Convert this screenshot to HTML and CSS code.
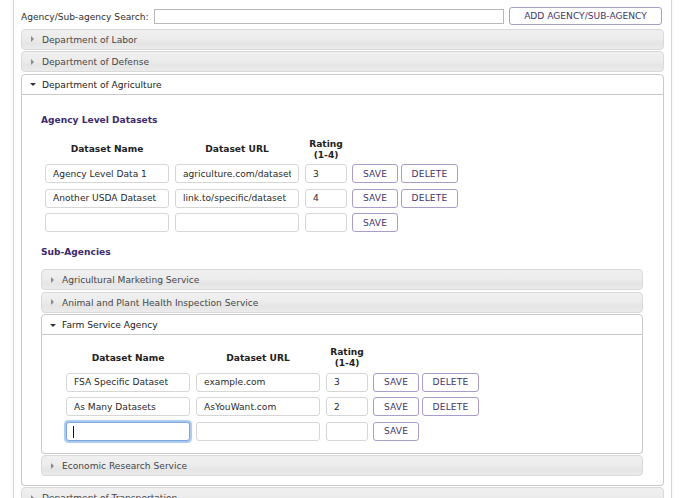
FILE: index.html
```html
<!DOCTYPE html>
<html>
<head>
<meta charset="utf-8">
<title>Agencies</title>
<link rel="stylesheet" href="styles.css">
</head>
<body>
<div class="page">
  <div class="search-row">
    <label class="search-label">Agency/Sub-agency Search:</label>
    <input class="search-input" type="text">
    <button class="btn btn-add">ADD AGENCY/SUB-AGENCY</button>
  </div>

  <div class="accordion">
    <div class="acc-header"><span class="tri tri-right"></span>Department of Labor</div>
    <div class="acc-header"><span class="tri tri-right"></span>Department of Defense</div>
    <div class="acc-header active"><span class="tri tri-down"></span>Department of Agriculture</div>
    <div class="acc-content outer">
      <h3 class="section-title first">Agency Level Datasets</h3>
      <div class="ds-grid">
        <div class="col-head">Dataset Name</div>
        <div class="col-head">Dataset URL</div>
        <div class="col-head">Rating<br>(1-4)</div>
        <div></div>

        <input class="field" type="text" value="Agency Level Data 1">
        <input class="field" type="text" value="agriculture.com/dataset">
        <input class="field" type="text" value="3">
        <div class="actions"><button class="btn btn-save">SAVE</button><button class="btn btn-del">DELETE</button></div>

        <input class="field" type="text" value="Another USDA Dataset">
        <input class="field" type="text" value="link.to/specific/dataset">
        <input class="field" type="text" value="4">
        <div class="actions"><button class="btn btn-save">SAVE</button><button class="btn btn-del">DELETE</button></div>

        <input class="field" type="text" value="">
        <input class="field" type="text" value="">
        <input class="field" type="text" value="">
        <div class="actions"><button class="btn btn-save">SAVE</button></div>
      </div>

      <h3 class="section-title second">Sub-Agencies</h3>

      <div class="accordion sub">
        <div class="acc-header"><span class="tri tri-right"></span>Agricultural Marketing Service</div>
        <div class="acc-header"><span class="tri tri-right"></span>Animal and Plant Health Inspection Service</div>
        <div class="acc-header active"><span class="tri tri-down"></span>Farm Service Agency</div>
        <div class="acc-content inner">
          <div class="ds-grid">
            <div class="col-head">Dataset Name</div>
            <div class="col-head">Dataset URL</div>
            <div class="col-head">Rating<br>(1-4)</div>
            <div></div>

            <input class="field" type="text" value="FSA Specific Dataset">
            <input class="field" type="text" value="example.com">
            <input class="field" type="text" value="3">
            <div class="actions"><button class="btn btn-save">SAVE</button><button class="btn btn-del">DELETE</button></div>

            <input class="field" type="text" value="As Many Datasets">
            <input class="field" type="text" value="AsYouWant.com">
            <input class="field" type="text" value="2">
            <div class="actions"><button class="btn btn-save">SAVE</button><button class="btn btn-del">DELETE</button></div>

            <span class="caret-wrap"><input class="field focused" type="text" value=""></span>
            <input class="field" type="text" value="">
            <input class="field" type="text" value="">
            <div class="actions"><button class="btn btn-save">SAVE</button></div>
          </div>
        </div>
        <div class="acc-header"><span class="tri tri-right"></span>Economic Research Service</div>
      </div>
    </div>
    <div class="acc-header"><span class="tri tri-right"></span>Department of Transportation</div>
  </div>
</div>
</body>
</html>
```

FILE: styles.css
```css
html, body {
  margin: 0;
  padding: 0;
  background: #ffffff;
  overflow: hidden;
}

body {
  font-family: "DejaVu Sans", Verdana, sans-serif;
  font-size: 9.1px;
  color: #333333;
}

.page {
  margin-left: 13px;
  width: 643px;
  padding: 7px 7px 0 7px;
  border-left: 1px solid #d6d6d6;
  border-right: 1px solid #d6d6d6;
  box-shadow: 0 0 3px rgba(0, 0, 0, 0.06);
  min-height: 520px;
}

.search-row {
  display: flex;
  align-items: center;
  height: 18px;
  margin-bottom: 3.5px;
}

.search-label {
  width: 129px;
  margin-right: 4px;
  padding-top: 1px;
  color: #2f2f2f;
  white-space: nowrap;
}

.search-input {
  box-sizing: border-box;
  width: 350px;
  height: 15px;
  margin: 1px 0 0 0;
  padding: 0 4px;
  border: 1px solid #b9b9b9;
  border-radius: 0;
  font: inherit;
  outline: none;
}

.btn {
  box-sizing: border-box;
  height: 19px;
  padding: 0;
  margin: 0;
  background: #ffffff;
  border: 1px solid #a99dcb;
  border-radius: 3px;
  font-family: "DejaVu Sans", Verdana, sans-serif;
  font-size: 9.1px;
  letter-spacing: 0.15px;
  color: #45386a;
  cursor: pointer;
}

.btn-add {
  width: 153px;
  height: 18px;
  margin-left: 5px;
  letter-spacing: 0;
}

/* Accordion */
.accordion {
  display: flex;
  flex-direction: column;
}

.acc-header {
  box-sizing: border-box;
  height: 21px;
  margin-top: 1.5px;
  display: flex;
  align-items: center;
  padding-left: 20px;
  padding-top: 1px;
  position: relative;
  border: 1px solid #d9d9d9;
  border-radius: 4px;
  background: linear-gradient(#f0f0f0 0%, #ececec 45%, #e5e5e5 70%, #ebebeb 100%);
  color: #474747;
  white-space: nowrap;
}

.accordion > .acc-header:first-child {
  margin-top: 0;
}

.acc-header.active {
  background: #ffffff;
  border-color: #c9c9c9;
  border-radius: 4px 4px 0 0;
  color: #222222;
}

.tri {
  position: absolute;
  left: 9px;
  top: 50%;
  width: 0;
  height: 0;
}

.tri-right {
  margin-top: -3px;
  border-top: 3px solid transparent;
  border-bottom: 3px solid transparent;
  border-left: 3px solid #8a8a8a;
}

.tri-down {
  margin-top: -1px;
  left: 8px;
  border-left: 3px solid transparent;
  border-right: 3px solid transparent;
  border-top: 3px solid #333333;
}

.acc-content {
  box-sizing: border-box;
  border: 1px solid #c9c9c9;
  border-top: 0;
  border-radius: 0 0 4px 4px;
  background: #ffffff;
}

.acc-content.outer {
  padding: 12px 20px 8.5px 19px;
}

.acc-content.inner {
  padding: 10px 20px 12px 20px;
}

.section-title {
  margin: 0;
  font-size: 9.1px;
  line-height: 12px;
  font-weight: bold;
  color: #3c2b6e;
}

.section-title.first {
  margin: 7px 0 11px 0;
}

.section-title.second {
  margin: 14px 0 11px 0;
}

/* Dataset grid */
.ds-grid {
  display: grid;
  grid-template-columns: 124px 124px 42px auto;
  column-gap: 6px;
  row-gap: 5.5px;
  padding-left: 4px;
  align-items: center;
}

.col-head {
  text-align: center;
  font-weight: bold;
  color: #222222;
  line-height: 11px;
  padding-top: 2px;
  margin-bottom: -2px;
}

.field {
  box-sizing: border-box;
  width: 100%;
  height: 19px;
  margin: 0;
  padding: 0 7px;
  border: 1px solid #d6d6d6;
  border-radius: 3px;
  font-family: "DejaVu Sans", Verdana, sans-serif;
  font-size: 9.1px;
  color: #2a2a2a;
  background: #ffffff;
  outline: none;
}

.field.focused {
  border-color: #7ea8dc;
  box-shadow: 0 0 1px 1.5px #a9c9ee;
}

.caret-wrap {
  position: relative;
  display: block;
}

.caret-wrap::after {
  content: "";
  position: absolute;
  left: 7px;
  top: 4px;
  width: 1px;
  height: 12px;
  background: #111111;
}

.actions {
  display: flex;
  gap: 3px;
  margin-left: -1px;
}

.btn-save {
  width: 46px;
}

.btn-del {
  width: 57px;
}
```
